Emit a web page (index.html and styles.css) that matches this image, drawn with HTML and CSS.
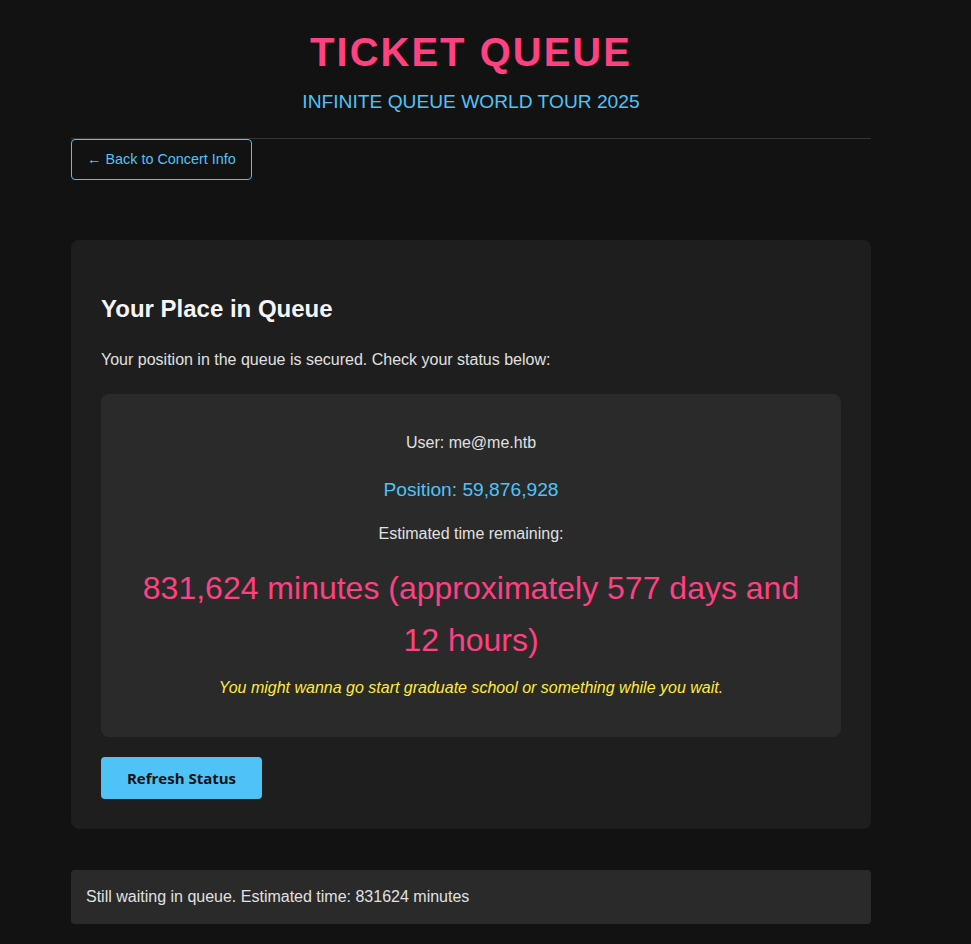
FILE: index.html
```html
<!DOCTYPE html>
<html lang="en">
<head>
<meta charset="utf-8">
<title>Ticket Queue</title>
<link rel="stylesheet" href="styles.css">
</head>
<body>
<div class="container">
  <header class="header">
    <h1 class="title">TICKET QUEUE</h1>
    <p class="subtitle">INFINITE QUEUE WORLD TOUR 2025</p>
  </header>
  <a class="back-btn" href="#">&larr; Back to Concert Info</a>

  <section class="card">
    <h2 class="card-title">Your Place in Queue</h2>
    <p class="card-text">Your position in the queue is secured. Check your status below:</p>
    <div class="status-box">
      <p class="user">User: me@me.htb</p>
      <p class="position">Position: 59,876,928</p>
      <p class="est-label">Estimated time remaining:</p>
      <p class="est-time">831,624 minutes (approximately 577 days and 12 hours)</p>
      <p class="joke">You might wanna go start graduate school or something while you wait.</p>
    </div>
    <button class="refresh-btn" type="button">Refresh Status</button>
  </section>

  <div class="message">Still waiting in queue. Estimated time: 831624 minutes</div>
</div>
</body>
</html>
```
FILE: styles.css
```css
* { box-sizing: border-box; }
html, body {
  margin: 0;
  background: #121212;
}
body {
  font-family: "Liberation Sans", Arial, sans-serif;
  color: #e0e0e0;
  font-size: 16px;
}
.container {
  width: 800px;
  margin-left: 71px;
  padding-bottom: 20px;
}
.header {
  text-align: center;
  border-bottom: 1px solid #333;
  padding: 29px 0 25px;
}
.title {
  margin: 0;
  font-size: 40px;
  line-height: 46px;
  letter-spacing: 2px;
  color: #ff4081;
  font-weight: bold;
}
.subtitle {
  margin: 16px 0 0;
  font-size: 19.2px;
  line-height: 22px;
  color: #4fc3f7;
}
.back-btn {
  display: inline-block;
  color: #4fc3f7;
  border: 1px solid #4fc3f7;
  border-radius: 4px;
  padding: 11px 15px 12px;
  font-size: 14.4px;
  line-height: 16px;
  text-decoration: none;
}
.card {
  margin-top: 60px;
  background: #1e1e1e;
  border-radius: 8px;
  padding: 30px;
}
.card-title {
  margin: 25px 0 0;
  font-size: 24px;
  line-height: 28px;
  color: #f5f5f5;
}
.card-text {
  margin: 27px 0 0;
  line-height: 20px;
}
.status-box {
  margin-top: 24px;
  background: #2a2a2a;
  border-radius: 8px;
  padding: 39px 20px 39px;
  text-align: center;
}
.status-box p { margin: 0; }
.user { line-height: 20px; }
.position {
  margin-top: 25px !important;
  font-size: 19.2px;
  line-height: 24px;
  color: #4fc3f7;
}
.est-label {
  margin-top: 22px !important;
  line-height: 20px;
}
.est-time {
  margin-top: 18px !important;
  font-size: 32px;
  line-height: 52px;
  color: #ff4081;
}
.joke {
  margin-top: 12px !important;
  font-style: italic;
  color: #ffeb3b;
  line-height: 20px;
}
.refresh-btn {
  display: block;
  margin-top: 20px;
  background: #4fc3f7;
  color: #121212;
  border: none;
  border-radius: 4px;
  width: 161px;
  height: 42px;
  font-family: "Open Sans", "DejaVu Sans", sans-serif;
  font-weight: bold;
  font-size: 15px;
  cursor: pointer;
}
.message {
  margin-top: 41px;
  background: #2a2a2a;
  border-radius: 4px;
  padding: 17px 15px;
  line-height: 20px;
}
```
